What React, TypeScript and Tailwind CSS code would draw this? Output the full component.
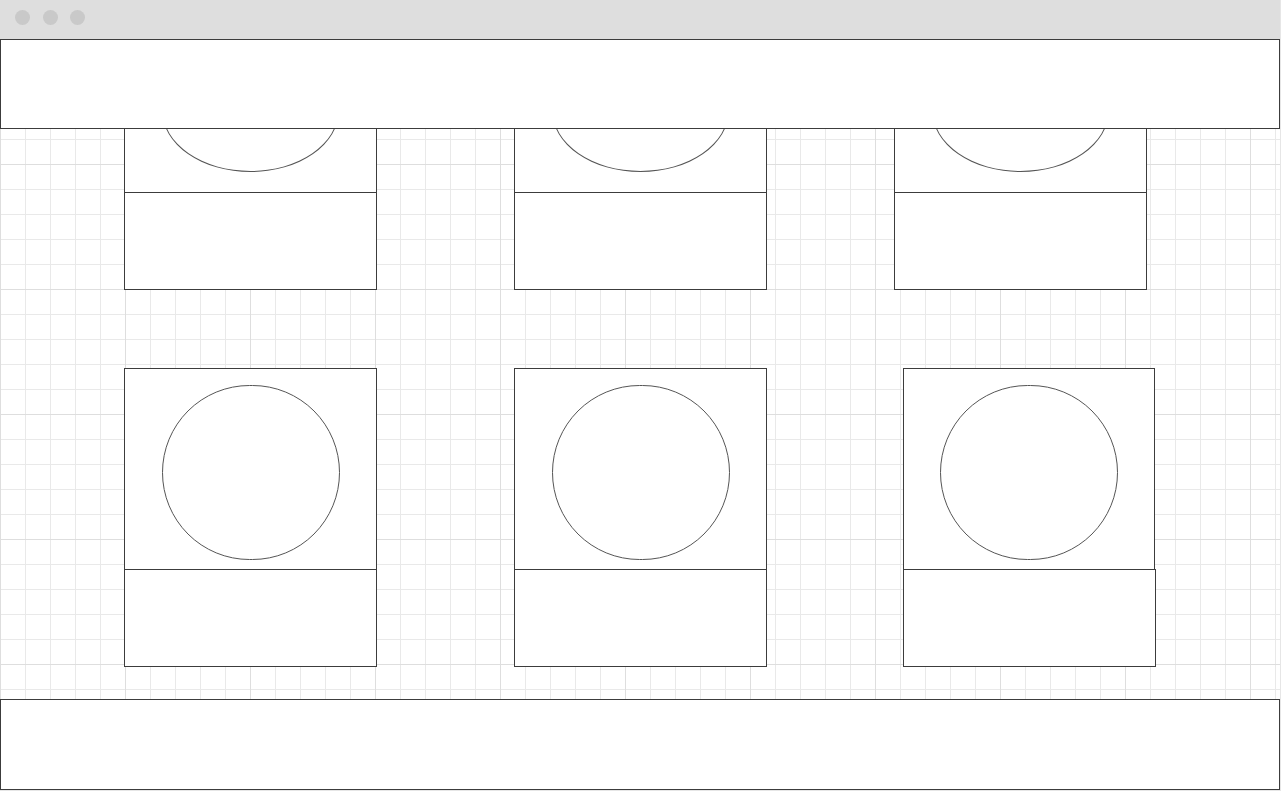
import React from "react";

type CardProps = {
    wide?: boolean;
    first?: boolean;
};

// one wireframe card: picture box with a circle, and a caption box below
function Card({ first, wide }: CardProps) {
    if (first) {
        return (
            <div className="w-[253px] shrink-0">
                <div className="h-[154px] border border-[#3c3c3c] bg-white flex justify-center pt-[9px]">
                    <div className="w-[177px] h-[123px] rounded-[50%] border border-[#555555]" />
                </div>
                <div className="-mt-px h-[98px] border border-[#3c3c3c] bg-white" />
            </div>
        );
    }

    return (
        <div className="w-[253px] shrink-0">
            <div className={`${wide ? "w-[252px]" : "w-[253px]"} h-[202px] border border-[#3c3c3c] bg-white flex justify-center pt-[16px]`}>
                <div className="w-[178px] h-[175px] rounded-full border border-[#555555]" />
            </div>
            <div className="-mt-px h-[98px] w-[253px] border border-[#3c3c3c] bg-white" />
        </div>
    );
}

export default function App() {
    return (
        <div className="w-[1281px] h-[791px] bg-[#e6e6e6] overflow-hidden">
            <div className="w-[1280px] h-[790px] flex flex-col">
                {/* Window chrome */}
                <div className="h-[39px] shrink-0 bg-[#dedede] flex items-start pt-[10px] pl-[15px]">
                    <span className="w-[15px] h-[15px] rounded-full bg-[#c9c9c9]" />
                    <span className="ml-[13px] w-[15px] h-[15px] rounded-full bg-[#c9c9c9]" />
                    <span className="ml-[12px] w-[15px] h-[15px] rounded-full bg-[#c9c9c9]" />
                </div>

                {/* Page */}
                <div className="relative flex-1 overflow-hidden bg-white bg-[linear-gradient(to_right,#dedede_1px,transparent_1px),linear-gradient(to_bottom,#dedede_1px,transparent_1px),linear-gradient(to_right,#e9e9e9_1px,transparent_1px),linear-gradient(to_bottom,#e9e9e9_1px,transparent_1px)] bg-[size:125px_125px,125px_125px,25px_25px,25px_25px]">
                    {/* Cards */}
                    <div className="flex flex-col">
                        <div className="flex pl-[124px]">
                            <Card first />
                            <div className="w-[137px] shrink-0" />
                            <Card first />
                            <div className="w-[127px] shrink-0" />
                            <Card first />
                        </div>
                        <div className="flex pl-[124px] mt-[78px]">
                            <Card />
                            <div className="w-[137px] shrink-0" />
                            <Card />
                            <div className="w-[136px] shrink-0" />
                            <Card wide />
                        </div>
                    </div>

                    {/* Header */}
                    <div className="absolute top-0 left-0 w-[1280px] h-[90px] border border-[#3c3c3c] bg-white" />

                    {/* Footer */}
                    <div className="absolute bottom-0 left-0 w-[1280px] h-[91px] border border-[#3c3c3c] bg-white" />
                </div>
            </div>
        </div>
    );
}
